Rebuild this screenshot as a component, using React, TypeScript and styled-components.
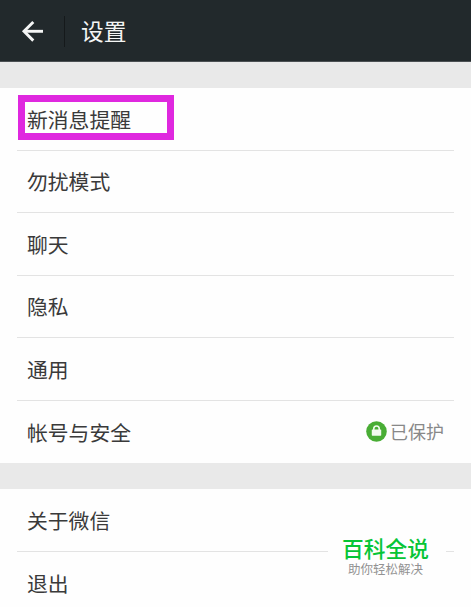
import React from "react";
import styled, { createGlobalStyle } from "styled-components";

const GlobalStyle = createGlobalStyle`
  *, *::before, *::after { box-sizing: border-box; }
  body {
    margin: 0;
    background: #e9e9e9;
    font-family: "Noto Sans CJK SC", "Noto Sans", sans-serif;
  }
`;

const Screen = styled.div`
  position: relative;
  width: 471px;
  height: 607px;
  overflow: hidden;
  background: #e9e9e9;
`;

const TopBar = styled.header`
  display: flex;
  align-items: center;
  height: 62px;
  padding: 1px 0 0 21px;
  background: #22292c;
  border-bottom: 1px solid #4b5053;
`;

const BackIcon = styled.svg`
  display: block;
  width: 24px;
  height: 24px;
`;

const Divider = styled.span`
  width: 1px;
  height: 31px;
  margin: 0 16px 0 19px;
  background: #15191b;
`;

const Title = styled.h1`
  margin: 0;
  color: #f4f5f5;
  font-size: 22.7px;
  font-weight: 400;
  line-height: 32px;
`;

const Group = styled.ul`
  list-style: none;
  margin: 26px 0 0;
  padding: 0 17px;
  background: #fefefe;
`;

const Row = styled.li`
  display: flex;
  align-items: center;
  justify-content: space-between;
  height: 62.5px;
  padding: 0 10px;
  border-bottom: 1px solid #e3e3e3;

  ${Group} + ${Group} > &:first-child { height: 63px; padding-top: 1px; }
  &:last-child { border-bottom: 0; height: 62px; }
`;

const Label = styled.span`
  position: relative;
  color: #3a3a3a;
  font-size: 20.8px;
  line-height: 30px;
`;

const Highlight = styled.span`
  position: absolute;
  left: -9px;
  top: -9px;
  width: 156px;
  height: 45px;
  border: 7px solid #df28df;
`;

const Status = styled.span`
  display: flex;
  align-items: center;
  gap: 3px;
  padding-bottom: 1px;
  color: #888;
  font-size: 18px;
  line-height: 26px;
`;

const LockIcon = styled.svg`
  display: block;
  width: 21px;
  height: 21px;
`;

const Watermark = styled.aside`
  position: absolute;
  left: 328px;
  top: 530px;
  width: 118px;
  height: 54px;
  padding: 5px 3px 0 0;
  background: #fefefe;
  text-align: center;
  white-space: nowrap;
`;

const Brand = styled.div`
  color: #06c536;
  font-size: 21.7px;
  font-weight: 500;
  line-height: 26px;
`;

const Slogan = styled.div`
  color: #929292;
  font-size: 12.5px;
  line-height: 15px;
`;

type Item = { label: string; highlighted?: boolean; status?: string };

const groups: Item[][] = [
  [
    { label: "新消息提醒", highlighted: true },
    { label: "勿扰模式" },
    { label: "聊天" },
    { label: "隐私" },
    { label: "通用" },
    { label: "帐号与安全", status: "已保护" },
  ],
  [{ label: "关于微信" }, { label: "退出" }],
];

export default function App() {
  return (
    <>
      <GlobalStyle />
      <Screen>
        <TopBar>
          <BackIcon viewBox="0 0 24 24" fill="none" stroke="#f4f5f5" strokeWidth="2.9">
            <path d="M12.3 3 3 12.3 12.3 21.6" />
            <path d="M3 12.3H22" />
          </BackIcon>
          <Divider />
          <Title>设置</Title>
        </TopBar>
        {groups.map((items, index) => (
          <Group key={index}>
            {items.map((item) => (
              <Row key={item.label}>
                <Label>
                  {item.label}
                  {item.highlighted && <Highlight />}
                </Label>
                {item.status && (
                  <Status>
                    <LockIcon viewBox="0 0 20 20">
                      <circle cx="10" cy="10" r="9.8" fill="#49ad35" />
                      <path d="M7.4 9V7.4a2.6 2.6 0 0 1 5.2 0V9" fill="none" stroke="#f2faef" strokeWidth="1.5" />
                      <rect x="5.5" y="8" width="9" height="6" rx=".6" fill="#f2faef" />
                    </LockIcon>
                    {item.status}
                  </Status>
                )}
              </Row>
            ))}
          </Group>
        ))}
        <Watermark>
          <Brand>百科全说</Brand>
          <Slogan>助你轻松解决</Slogan>
        </Watermark>
      </Screen>
    </>
  );
}
